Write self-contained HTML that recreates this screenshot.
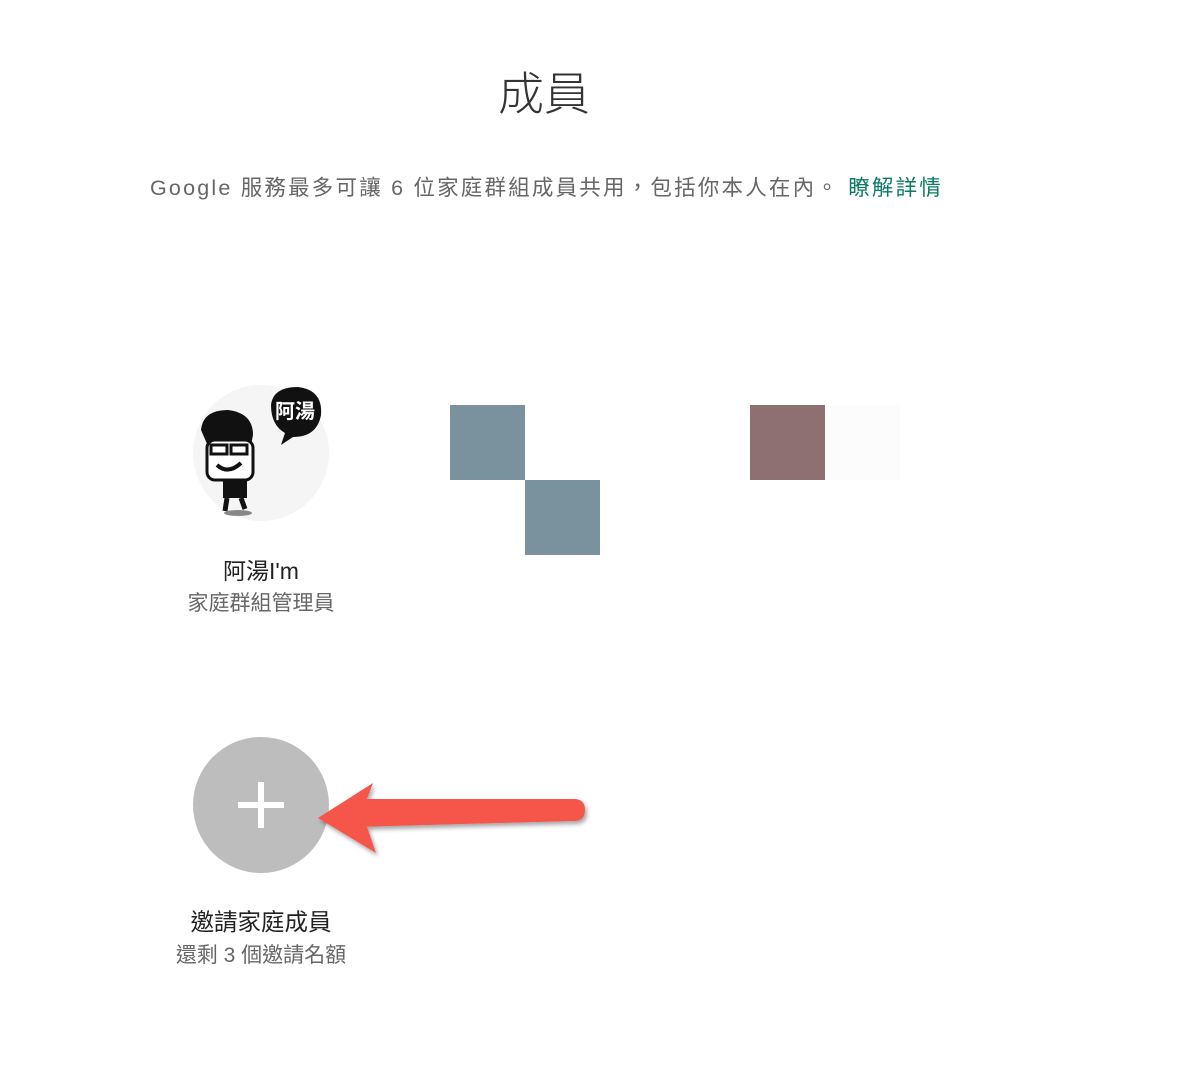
<!DOCTYPE html>
<html><head><meta charset="utf-8"><style>
body{margin:0;width:1200px;height:1080px;background:#fff;position:relative;overflow:hidden;font-family:"Liberation Sans","Noto Sans CJK TC",sans-serif}
.a{position:absolute;white-space:nowrap}
</style></head><body>
<div class="a" style="left:0;width:1088px;text-align:center;top:58px;font-size:46px;font-weight:300;color:#333">成員</div>
<div class="a" style="left:150px;top:171px;font-size:21.5px;letter-spacing:2.2px;color:#666">Google 服務最多可讓 6 位家庭群組成員共用，包括你本人在內。 <span style="color:#0b7a64">瞭解詳情</span></div>

<svg class="a" style="left:193px;top:385px" width="140" height="140" viewBox="0 0 140 140">
<circle cx="68" cy="68" r="68" fill="#f5f5f5"/>
<path d="M78 20 Q80 2 105 2 Q130 5 128 30 Q124 52 100 52 L88 60 L92 48 Q78 40 78 20Z" fill="#111"/>
<text x="82" y="33" font-size="20" font-weight="bold" fill="#fff" font-family="Noto Sans CJK TC">阿湯</text>
<path d="M8 45 Q10 25 35 25 Q60 28 60 50 L58 60 L18 68 Z" fill="#111"/>
<rect x="14" y="55" width="46" height="40" rx="8" fill="#fff" stroke="#111" stroke-width="3"/>
<rect x="18" y="60" width="16" height="9" fill="none" stroke="#111" stroke-width="3"/>
<rect x="38" y="60" width="16" height="9" fill="none" stroke="#111" stroke-width="3"/>
<path d="M24 80 Q35 90 48 78" stroke="#111" stroke-width="4" fill="none"/>
<rect x="30" y="95" width="24" height="18" fill="#111"/>
<path d="M34 113 L32 126 M48 113 L52 124" stroke="#111" stroke-width="5"/>
<ellipse cx="45" cy="128" rx="14" ry="3" fill="#888"/>
</svg>
<div class="a" style="left:111px;width:300px;text-align:center;top:552px;font-size:23px;color:#222">阿湯I'm</div>
<div class="a" style="left:111px;width:300px;text-align:center;top:587px;font-size:21px;color:#666">家庭群組管理員</div>

<div class="a" style="left:450px;top:405px;width:75px;height:75px;background:#79929d"></div>
<div class="a" style="left:525px;top:480px;width:75px;height:75px;background:#79929d"></div>
<div class="a" style="left:750px;top:405px;width:75px;height:75px;background:#8f7070"></div>
<div class="a" style="left:825px;top:405px;width:75px;height:75px;background:#fcfcfc"></div>

<div class="a" style="left:193px;top:737px;width:136px;height:136px;border-radius:50%;background:#bdbdbd"></div>
<div class="a" style="left:238px;top:802px;width:46px;height:6px;background:#fff"></div>
<div class="a" style="left:258px;top:782px;width:6px;height:46px;background:#fff"></div>
<div class="a" style="left:111px;width:300px;text-align:center;top:903px;font-size:23.5px;color:#222">邀請家庭成員</div>
<div class="a" style="left:111px;width:300px;text-align:center;top:939px;font-size:21px;color:#666">還剩 3 個邀請名額</div>

<svg class="a" style="left:0;top:0" width="1200" height="1080">
<defs><filter id="s"><feDropShadow dx="2" dy="3" stdDeviation="2" flood-opacity="0.35"/></filter></defs>
<g filter="url(#s)" fill="#f5564a">
<path d="M355 799 L574 799 Q585 799 585 810 Q585 821 574 821 L355 827 Z"/>
<path d="M318 818 L373 783 L362 812 L376 853 Z"/>
</g>
</svg>
</body></html>
